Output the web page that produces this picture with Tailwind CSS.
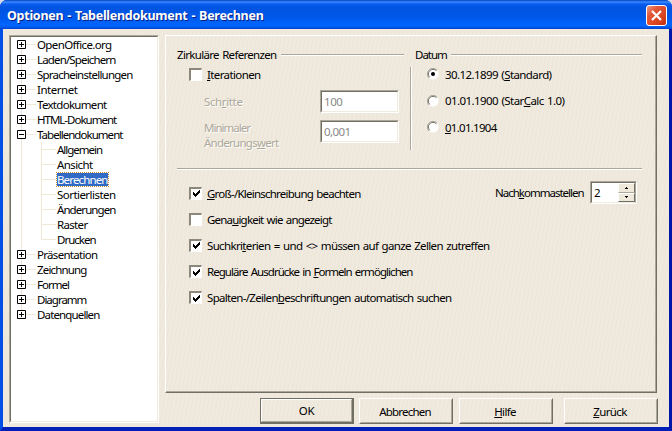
<!DOCTYPE html>
<html lang="de">
<head>
<meta charset="utf-8">
<title>Optionen - Tabellendokument - Berechnen</title>
<script src="https://cdn.jsdelivr.net/npm/@tailwindcss/browser@4"></script>
</head>
<body class="w-[672px] h-[431px] overflow-hidden bg-[#d8dce8] font-['Noto_Sans','Liberation_Sans',sans-serif] text-[11.5px] leading-[15px] text-black [word-spacing:1px]">
<svg class="absolute size-0">
  <symbol id="check" viewBox="0 0 7 7"><path d="M0 2v3h1v1h1v1h1v-1h1v-1h1v-1h1v-1h1v-3h-1v1h-1v1h-1v1h-1v1h-1v-1h-1v-1z" fill="#000"/></symbol>
  <symbol id="plus" viewBox="0 0 9 9"><path d="M.5 .5h8v8h-8zM2 4.5h5M4.5 2v5" fill="none" stroke="#000"/></symbol>
  <symbol id="minus" viewBox="0 0 9 9"><path d="M.5 .5h8v8h-8zM2 4.5h5" fill="none" stroke="#000"/></symbol>
  <symbol id="radio" viewBox="0 0 12 12"><circle cx="6" cy="6" r="5.6" fill="#fff"/><path d="M2 10A5.5 5.5 0 0 1 10 2" fill="none" stroke="#aca899"/><path d="M2.7 9.3A4.6 4.6 0 0 1 9.3 2.7" fill="none" stroke="#716f64"/></symbol>
</svg>
<div class="flex flex-col h-full rounded-t-[7px] overflow-hidden bg-[#0034c8]">
  <header class="h-[29px] shrink-0 flex items-center justify-between pl-[7px] pr-[5px] pt-[2px] bg-[linear-gradient(to_bottom,#0040c0_0,#3b8cff_2px,#0a5cf0_4px,#0054e0_8px,#0058ec_18px,#0066ff_25px,#005cf0_27px,#0040cc_29px)]">
    <h1 data-w="256" class="font-bold text-[12.5px] leading-[20px] text-white whitespace-nowrap [text-shadow:1px_1px_0_#0a1f80]">Optionen - Tabellendokument - Berechnen</h1>
    <button class="size-[21px] rounded-[3px] border border-white bg-[linear-gradient(135deg,#ee9a80_0,#e2593a_30%,#d8401c_75%,#b83010_100%)] flex items-center justify-center" aria-label="Schließen">
      <svg class="size-[13px]" viewBox="0 0 13 13"><path d="M2 2l9 9M11 2l-9 9" stroke="#fff" stroke-width="2.2"/></svg>
    </button>
  </header>
  <div class="flex-1 min-h-0 border-l-[3px] border-r-[3px] border-b-[4px] border-l-[#0050e8] border-r-[#0018a8] border-b-[#0020b8] flex bg-[#efe9dc] bg-[repeating-linear-gradient(100deg,#f0eade_0,#f0eade_2px,#eee5da_3px,#ece9dc_4px)] pt-[6px] pl-[6px]">
    <nav class="w-[150px] h-[388px] shrink-0 border-t border-l border-[#aca899] border-r border-b border-r-white border-b-white">
      <div class="h-full border-t border-l border-[#716f64] border-r border-b border-r-[#efecdf] border-b-[#efecdf] bg-white pl-[6px]">
        <div id="tree" class="relative"></div>
      </div>
    </nav>
    <div class="ml-[6px] w-[500px]">
      <main class="w-[492px] h-[358px] border-l border-t border-l-white border-t-white border-r border-b border-r-[#716f64] border-b-[#716f64]">
        <div class="h-full border-r border-b border-[#aca899] pl-[11px] pt-[11px] w-full">
          <div class="flex h-[121px]">
            <section class="w-[227px]">
              <div class="flex items-center h-[15px]"><h2 data-w="99">Zirkuläre Referenzen</h2><hr class="ml-[4px] flex-1 h-[2px] border-t border-t-[#aca899] border-b border-b-white"></div>
              <div class="flex items-center h-[24px] pl-[12px] gap-[5px]">
                <i class="size-[13px] bg-white border-t-2 border-l-2 border-[#8b887b] border-r border-b border-r-[#fff] border-b-[#fff]"></i><label data-w="53"><u>I</u>terationen</label>
              </div>
              <div class="flex justify-between pl-[27px] pr-[5px] mt-[4px] text-[#aca899] [text-shadow:1px_1px_0_#fff]">
                <div class="pt-[4px]"><div class="h-[26px]"><label data-w="38">Sch<u>r</u>itte</label></div><div class="h-[15px]"><label data-w="43">Minimaler</label></div><div><label data-w="74">Änderungs<u>w</u>ert</label></div></div>
                <div class="flex flex-col gap-[7px] text-[#8a8a86] [text-shadow:none]">
                  <div class="w-[79px] h-[23px] border-t border-l border-[#aca899] border-r border-b border-r-white border-b-white"><div class="h-full border-t border-l border-[#716f64] border-r border-b border-r-[#efecdf] border-b-[#efecdf] bg-white pl-[2px] pt-[2px]"><span data-w="18">100</span></div></div>
                  <div class="w-[79px] h-[23px] border-t border-l border-[#aca899] border-r border-b border-r-white border-b-white"><div class="h-full border-t border-l border-[#716f64] border-r border-b border-r-[#efecdf] border-b-[#efecdf] bg-white pl-[2px] pt-[2px]"><span data-w="26">0,001</span></div></div>
                </div>
              </div>
            </section>
            <div class="ml-[6px] mt-[20px] w-[2px] h-[83px] border-l border-l-[#aca899] border-r border-r-white"></div>
            <section class="ml-[3px] w-[227px]">
              <div class="flex items-center h-[15px]"><h2 data-w="30">Datum</h2><hr class="ml-[4px] flex-1 h-[2px] border-t border-t-[#aca899] border-b border-b-white"></div>
              <div class="pl-[12px]">
                <div class="flex items-center gap-[6px] h-[24px]"><svg class="size-[12px]"><use href="#radio"/><circle cx="6" cy="6" r="2" fill="#000"/></svg><label data-w="106">30.12.1899 (<u>S</u>tandard)</label></div>
                <div class="flex items-center gap-[6px] h-[29px]"><svg class="size-[12px]"><use href="#radio"/></svg><label data-w="119">01.01.1900 (Star<u>C</u>alc 1.0)</label></div>
                <div class="flex items-center gap-[6px] h-[24px]"><svg class="size-[12px]"><use href="#radio"/></svg><label data-w="51"><u>0</u>1.01.1904</label></div>
              </div>
            </section>
          </div>
          <hr class="w-[465px] h-[2px] border-t border-t-[#aca899] border-b border-b-white">
          <div class="flex pt-[10px]">
            <div id="checks" class="w-[318px] shrink-0 pl-[12px]"></div>
            <div class="flex h-[25px] items-center">
              <label class="block w-[86px] shrink-0"><span data-w="86">Nach<u>k</u>ommastellen</span></label>
              <div class="ml-[9px] shrink-0 w-[47px] h-[23px] border-t border-l border-[#aca899] border-r border-b border-r-white border-b-white">
                <div class="h-full border-t border-l border-[#716f64] border-r border-b border-r-[#aca899] border-b-[#efecdf] bg-white flex justify-between">
                  <span class="pl-[2px] pt-[2px]">2</span>
                  <div class="w-[17px] flex flex-col bg-[#efe9dc]">
                    <div class="flex-1 border border-l-white border-t-white border-r-[#716f64] border-b-[#aca899] flex items-center justify-center"><svg class="w-[3px] h-[2px]"><path d="M1 0h1v1h1v1h-3v-1h1z"/></svg></div>
                    <div class="flex-1 border border-l-white border-t-white border-r-[#716f64] border-b-[#716f64] flex items-center justify-center"><svg class="w-[3px] h-[2px]"><path d="M0 0h3v1h-1v1h-1v-1h-1z"/></svg></div>
                  </div>
                </div>
              </div>
            </div>
          </div>
        </div>
      </main>
      <footer class="flex pl-[95px] pt-[5px]">
        <button class="w-[94px] h-[26px] shrink-0 border border-r-2 border-b-2 border-[#716f64]"><span class="flex h-full items-center justify-center border border-l-white border-t-white border-r-[#aca899] border-b-[#aca899]"><span data-w="15">OK</span></span></button>
        <button class="ml-[5px] w-[94px] h-[26px] shrink-0 border border-l-white border-t-white border-r-[#716f64] border-b-[#716f64]"><span class="flex h-full items-center justify-center border border-l-transparent border-t-transparent border-r-[#aca899] border-b-[#aca899] pr-[2px]"><span data-w="51">Abbrechen</span></span></button>
        <button class="ml-[6px] w-[94px] h-[26px] shrink-0 border border-l-white border-t-white border-r-[#716f64] border-b-[#716f64]"><span class="flex h-full items-center justify-center border border-l-transparent border-t-transparent border-r-[#aca899] border-b-[#aca899] pr-[2px]"><span data-w="21"><u>H</u>ilfe</span></span></button>
        <button class="ml-[11px] w-[94px] h-[26px] shrink-0 border border-l-white border-t-white border-r-[#716f64] border-b-[#716f64]"><span class="flex h-full items-center justify-center border border-l-transparent border-t-transparent border-r-[#aca899] border-b-[#aca899] pr-[2px]"><span data-w="33"><u>Z</u>urück</span></span></button>
      </footer>
    </div>
  </div>
</div>
<script>
const tree = [['OpenOffice.org',74],['Laden/Speichern',78],['Spracheinstellungen',95],['Internet',40],['Textdokument',69],['HTML-Dokument',78],
['Tabellendokument',85,'open'],['Allgemein',44,'child'],['Ansicht',35,'child'],['Berechnen',50,'sel'],['Sortierlisten',58,'child'],['Änderungen',58,'child'],['Raster',30,'child'],['Drucken',38,'last'],
['Präsentation',60],['Zeichnung',49],['Formel',31],['Diagramm',44],['Datenquellen',62]];
document.getElementById('tree').innerHTML = '<div class="absolute left-[4px] top-[7px] w-px h-[270px] bg-[#efe4d6]"></div>' + tree.map(([t,w,k]) => {
  if (!k || k === 'open') return `<div class="relative flex items-center h-[15px]"><svg class="size-[9px] bg-white"><use href="#${k ? 'minus' : 'plus'}"/></svg><i class="w-[10px] h-px bg-[#efe9d6] mr-[1px]"></i><span data-w="${w}">${t}</span></div>`;
  const sel = k === 'sel' ? 'bg-[#316ac5] text-white outline-1 outline-dotted outline-[#c88a30]' : '';
  return `<div class="relative flex items-center h-[15px] pl-[24px]"><i class="w-px self-stretch bg-[#efe9d6] ${k === 'last' ? 'mb-[7px]' : ''}"></i><i class="w-[14px] h-px bg-[#efe9d6] mr-[1px]"></i><span class="h-[13px] leading-[13px] ${sel}"><span data-w="${w}">${t}</span></span></div>`;
}).join('');
const checks = [['<u>G</u>roß-/Kleinschreibung beachten',153,1],['Gena<u>u</u>igkeit wie angezeigt',124,0],['Suchkri<u>t</u>erien = und &lt;&gt; müssen auf ganze Zellen zutreffen',282,1],['Reguläre Ausdrücke in <u>F</u>ormeln ermöglichen',205,1],['Spalten-/Zeilen<u>b</u>eschriftungen automatisch suchen',244,1]];
document.getElementById('checks').innerHTML = checks.map(([t,w,c]) => `<div class="flex items-center h-[26.2px] gap-[5px]"><i class="shrink-0 size-[13px] bg-white border-t-2 border-l-2 border-[#8b887b] border-r border-b border-r-white border-b-white flex items-center justify-center">${c ? '<svg class="size-[7px]"><use href="#check"/></svg>' : ''}</i><label data-w="${w}">${t}</label></div>`).join('');
function fit() {
  document.querySelectorAll('[data-w]').forEach(e => {
    e.classList.add('inline-block', 'whitespace-nowrap', 'shrink-0');
    e.style.letterSpacing = '0px';
    const d = (+e.dataset.w + 0.5 - e.getBoundingClientRect().width) / e.textContent.length;
    e.style.letterSpacing = Math.max(-1, Math.min(1, d)).toFixed(3) + 'px';
  });
}
fit();
addEventListener('load', fit);
document.fonts.ready.then(fit);
</script>
</body>
</html>
